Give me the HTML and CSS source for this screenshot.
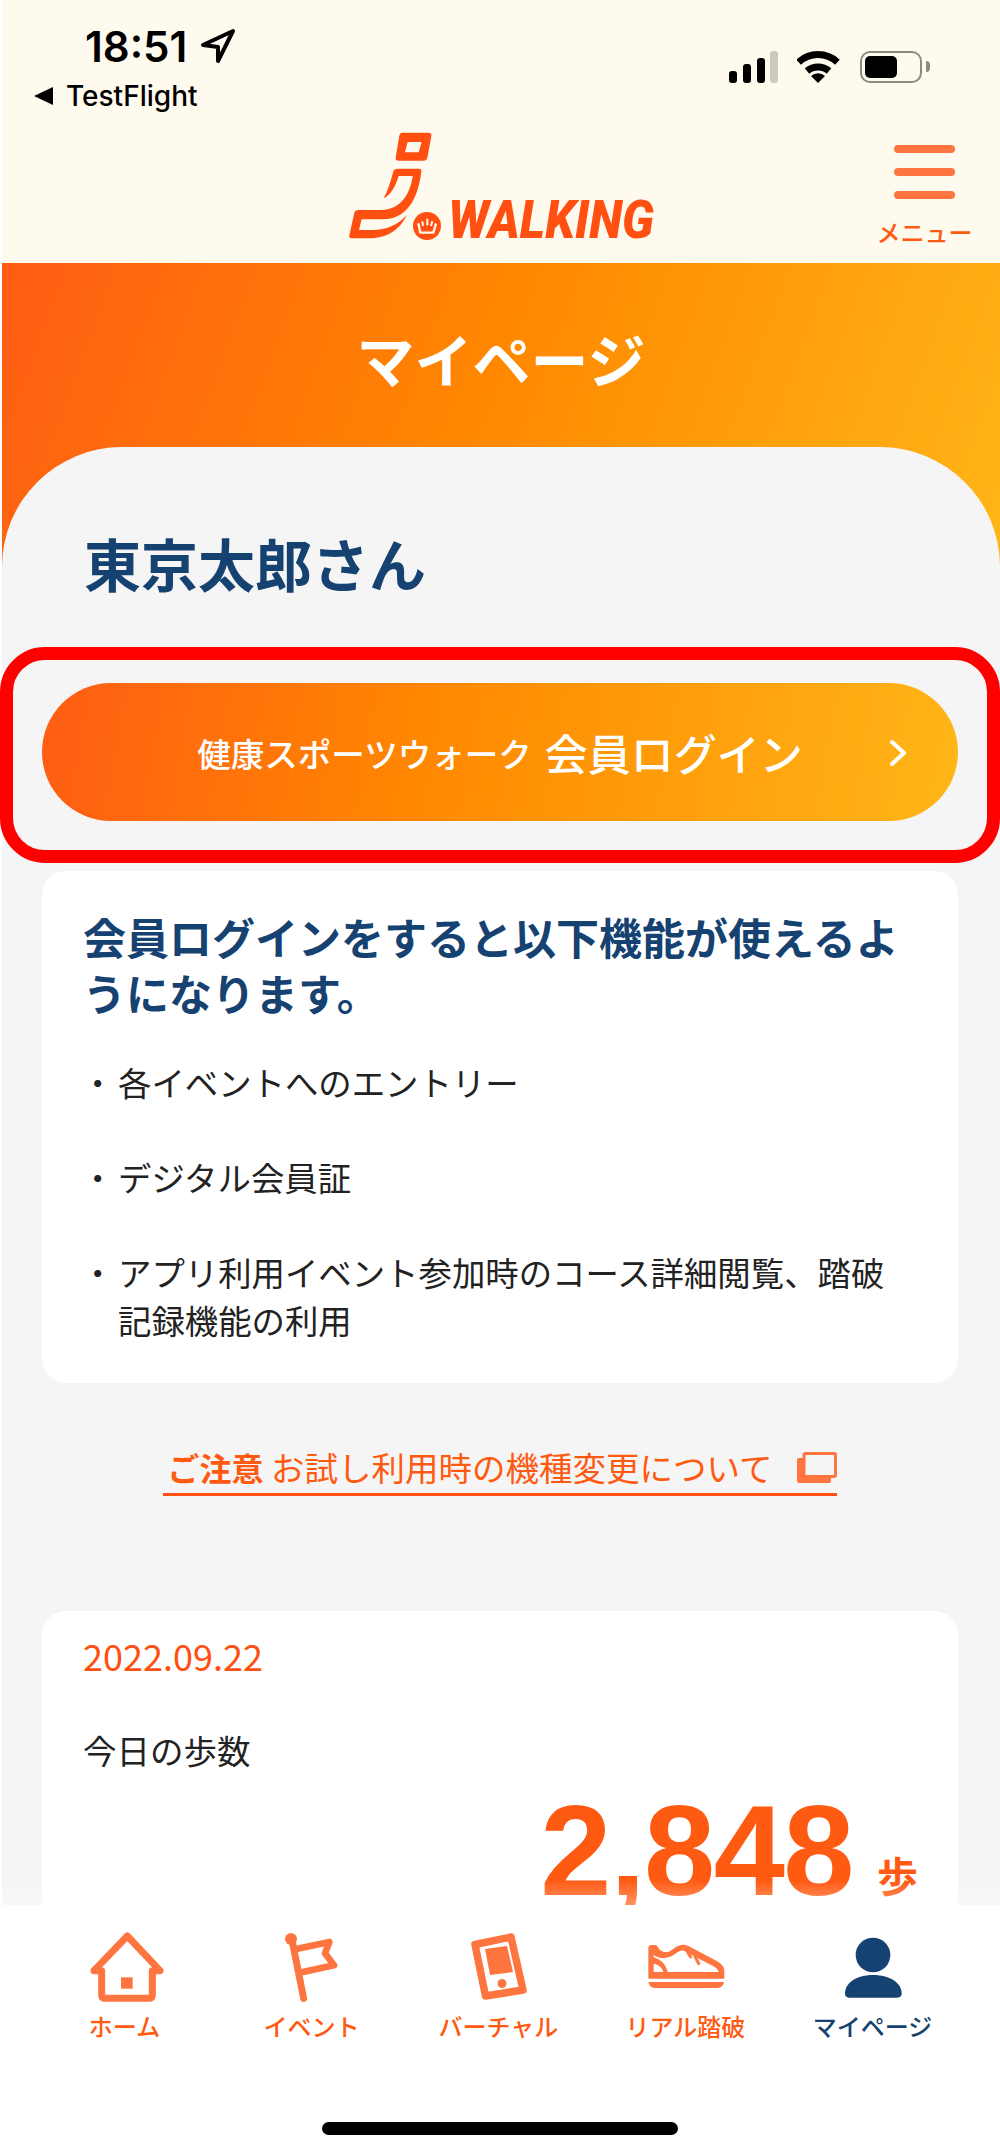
FILE: index.html
```html
<!DOCTYPE html>
<html lang="ja">
<head>
<meta charset="utf-8">
<title>マイページ</title>
<link rel="stylesheet" href="styles.css">
</head>
<body>
<div class="phone">

  <header class="top">
    <div class="status">
      <div class="status-left">
        <div class="clock">
          <span class="time">18:51</span>
          <svg class="locate" viewBox="0 0 36 36"><path d="M33 3 L3 17 L18 19 L18 33 Z" fill="none" stroke="#000" stroke-width="4" stroke-linejoin="round"/></svg>
        </div>
        <div class="back"><span class="back-arrow"></span>TestFlight</div>
      </div>
      <div class="status-right">
        <svg class="signal" viewBox="0 0 50 32">
          <rect x="0" y="20" width="8" height="12" rx="3" fill="#000"/>
          <rect x="14" y="13" width="8" height="19" rx="3" fill="#000"/>
          <rect x="28" y="7" width="8" height="25" rx="3" fill="#000"/>
          <rect x="41" y="0" width="8" height="32" rx="3" fill="#cdcabd"/>
        </svg>
        <svg class="wifi" viewBox="0 0 44 32">
          <path d="M1.6 11.2 A28.5 28.5 0 0 1 40.4 11.2" fill="none" stroke="#000" stroke-width="7"/>
          <path d="M10 20 A17 17 0 0 1 32 20" fill="none" stroke="#000" stroke-width="7"/>
          <path d="M21 32 L14 25 A10 10 0 0 1 28 25 Z" fill="#000"/>
        </svg>
        <div class="battery"><div class="battery-fill"></div></div>
        <div class="battery-nub"></div>
      </div>
    </div>
    <div class="brand">
      <svg class="logo" viewBox="0 0 1200 450">
        <path fill-rule="evenodd" fill="#ff5012" d="M304 68 H382 Q393 68 391 79 L379 143 Q377 152 368 152 H292 Q282 152 284 142 L295 77 Q297 68 304 68 Z M320 96 L312 127 H353 L362 96 Z"/>
        <path fill="#ff5012" d="M290 176 H354 Q362 176 361 184 C355 235 335 328 245 328 H182 L174 360 H215 C255 360 290 345 318 315 C295 360 260 385 200 385 H152 Q143 385 145 376 L160 308 Q162 300 172 300 H240 C305 300 330 240 335 198 H293 C285 225 270 255 248 265 C262 240 270 210 277 184 Q279 176 290 176 Z"/>
        <circle cx="378" cy="348" r="42" fill="#ff5012"/>
        <path d="M352 340 L358 368 H397 L405 340" fill="none" stroke="#fffaee" stroke-width="7" stroke-linejoin="round"/>
        <path d="M366 348 L364 334 M379 346 V326 M390 348 L394 334" fill="none" stroke="#fffaee" stroke-width="6"/>
        <text class="logo-word" transform="translate(442 385) scale(.91 1)">WALKING</text>
      </svg>
      <div class="menu">
        <span class="menu-bar"></span>
        <span class="menu-bar"></span>
        <span class="menu-bar"></span>
        <span class="menu-label">メニュー</span>
      </div>
    </div>
  </header>

  <section class="hero">
    <h1>マイページ</h1>
    <main class="sheet">
      <h2 class="user-name">東京太郎さん</h2>
      <a class="login-btn">
        <span class="login-small">健康スポーツウォーク</span>
        <span class="login-big">会員ログイン</span>
        <svg class="chevron" viewBox="0 0 16 26"><path d="M2 2 L14 13 L2 24" fill="none" stroke="#fff" stroke-width="4" stroke-linecap="round" stroke-linejoin="round"/></svg>
        <span class="highlight"></span>
      </a>
      <div class="card info-card">
        <h3>会員ログインをすると以下機能が使えるようになります。</h3>
        <ul>
          <li>各イベントへのエントリー</li>
          <li>デジタル会員証</li>
          <li>アプリ利用イベント参加時のコース詳細閲覧、踏破記録機能の利用</li>
        </ul>
      </div>
      <div class="notice-wrap">
        <a class="notice">
          <span><b>ご注意</b> お試し利用時の機種変更について</span>
          <svg class="window-icon" viewBox="0 0 40 31"><rect x="0" y="6" width="34" height="25" rx="2" fill="#ff7540"/><rect x="7" y="1.5" width="31.5" height="23" rx="1.5" fill="#f5f5f5" stroke="#ff7540" stroke-width="3"/></svg>
        </a>
      </div>
      <div class="card steps-card">
        <div class="date">2022.09.22</div>
        <div class="steps-label">今日の歩数</div>
        <div class="steps"><span class="steps-num">2,848</span><span class="steps-unit">歩</span></div>
      </div>
    </main>
  </section>

  <nav class="tabbar">
    <div class="tabs">
      <a class="tab">
        <svg viewBox="120 0 270 216"><path d="M162 122 L262 18 L360 122 H337 V195 Q337 205 327 205 H195 Q185 205 185 195 V122 Z" fill="none" stroke="#ff7540" stroke-width="21" stroke-linejoin="round"/><rect x="243" y="142" width="35" height="34" fill="#ff7540"/></svg>
        <span>ホーム</span>
      </a>
      <a class="tab">
        <svg viewBox="681 0 270 216"><circle cx="753" cy="27" r="18" fill="#ff7540"/><path d="M757 35 L791 205" fill="none" stroke="#ff7540" stroke-width="21" stroke-linecap="round"/><path d="M765 58 L868 36 L855 70 L882 106 L785 127" fill="none" stroke="#ff7540" stroke-width="20" stroke-linejoin="round"/></svg>
        <span>イベント</span>
      </a>
      <a class="tab">
        <svg viewBox="455 1930 90 72"><path d="M476 1944.5 L512 1937 L524 1990 L486.5 1996 Z" fill="none" stroke="#ff7540" stroke-width="7.5" stroke-linejoin="round"/><path d="M486 1949 L508 1946 L514 1972 L491 1975 Z" fill="#ff7540"/><circle cx="503" cy="1983.5" r="4.5" fill="#ff7540"/></svg>
        <span>バーチャル</span>
      </a>
      <a class="tab">
        <svg viewBox="366 0 270 216"><path fill="#ff7540" d="M388 55 Q388 45 398 45 H408 Q414 45 417 52 C424 66 442 72 458 60 C470 50 482 43 494 44 Q502 45 510 49 L592 92 C608 101 616 110 616 122 V146 H388 Z"/><path fill="#fff" d="M404 75 C425 90 450 85 468 72 C478 64 487 60 494 62 L586 110 C594 115 598 120 599 126 H446 C440 102 425 88 404 82 Z"/><path fill="#fff" d="M404 101 C420 104 430 114 433 126 H404 Z"/><path d="M505 66 L517 84 M527 78 L541 104" stroke="#ff7540" stroke-width="9" fill="none"/><path fill="#ff7540" d="M388 156 H615 Q612 173 596 174 H406 Q391 173 388 156 Z"/></svg>
        <span>リアル踏破</span>
      </a>
      <a class="tab tab-active">
        <svg viewBox="927 0 270 216"><circle cx="1062" cy="75" r="52" fill="#164271"/><path d="M978 190 C978 160 1010 135 1062 135 C1115 135 1148 160 1148 190 Q1148 203 1135 203 H990 Q978 203 978 190 Z" fill="#164271"/></svg>
        <span>マイページ</span>
      </a>
    </div>
    <div class="home-bar"></div>
  </nav>

</div>
</body>
</html>
```

FILE: styles.css
```css
* {
    box-sizing: border-box;
}

html, body {
    margin: 0;
    padding: 0;
    background: #fff;
}

body {
    font-family: "Noto Sans CJK JP", "Liberation Sans", sans-serif;
    color: #222;
}

.phone {
    position: relative;
    width: 1000px;
    height: 2156px;
    padding-left: 2px;
    overflow: hidden;
}

/* status bar + logo */
.top {
    height: 263px;
    background: #fffaee;
}

.status {
    display: flex;
    justify-content: space-between;
    height: 110px;
    padding: 22px 70px 0 32px;
}

.clock {
    display: flex;
    align-items: center;
    padding-left: 51px;
    height: 48px;
}

.time {
    font-family: Inter, "Liberation Sans", sans-serif;
    font-size: 42px;
    font-weight: 600;
    color: #000;
}

.locate {
    width: 36px;
    height: 36px;
    margin-left: 13px;
}

.back {
    display: flex;
    align-items: center;
    margin-top: 9px;
    font-family: Inter, "Liberation Sans", sans-serif;
    font-size: 28px;
    font-weight: 500;
    color: #000;
}

.back-arrow {
    width: 0;
    height: 0;
    margin-right: 13px;
    border-top: 9px solid transparent;
    border-bottom: 9px solid transparent;
    border-right: 19px solid #000;
}

.status-right {
    display: flex;
    align-items: center;
    height: 33px;
    margin-top: 28px;
}

.signal {
    width: 50px;
    height: 32px;
}

.wifi {
    width: 44px;
    height: 32px;
    margin-left: 18px;
}

.battery {
    width: 62px;
    height: 32px;
    margin-left: 19px;
    padding: 3px;
    border: 2px solid #8d8b80;
    border-radius: 10px;
}

.battery-fill {
    width: 32px;
    height: 100%;
    background: #000;
    border-radius: 5px;
}

.battery-nub {
    width: 4px;
    height: 11px;
    margin-left: 4px;
    background: #8d8b80;
    border-radius: 0 4px 4px 0;
}

.brand {
    display: flex;
    justify-content: center;
    position: relative;
}

.logo {
    display: block;
    width: 400px;
    height: 150px;
}

.logo-word {
    font-family: Roboto, "Liberation Sans", sans-serif;
    font-size: 159px;
    font-weight: 900;
    font-style: italic;
    fill: #ff5012;
}

.menu {
    position: absolute;
    right: 29px;
    top: 35px;
    display: flex;
    flex-direction: column;
    align-items: center;
    width: 93px;
}

.menu-bar {
    width: 61px;
    height: 8px;
    margin-bottom: 15px;
    background: #ff7540;
    border-radius: 4px;
}

.menu-label {
    margin-top: 3px;
    font-size: 24px;
    font-weight: 500;
    line-height: 30px;
    white-space: nowrap;
    color: #ff5a12;
}

/* gradient head + grey sheet */
.hero {
    background: linear-gradient(110deg, #ff5c14 0%, #ff8800 48%, #ffb618 100%) no-repeat;
    background-size: 100% 310px;
    padding-top: 53px;
}

.hero h1 {
    margin: 0;
    height: 131px;
    font-size: 58px;
    font-weight: 700;
    line-height: 84px;
    text-align: center;
    color: #fff;
}

.sheet {
    padding: 75px 40px 300px 40px;
    background: #f5f5f5;
    border-radius: 120px 120px 0 0;
}

.user-name {
    margin: 0 0 0 42px;
    font-size: 57px;
    font-weight: 700;
    line-height: 80px;
    color: #164271;
}

.login-btn {
    position: relative;
    display: flex;
    align-items: center;
    justify-content: center;
    width: 916px;
    height: 138px;
    margin-top: 81px;
    color: #fff;
    background: linear-gradient(100deg, #ff5c14 0%, #ff8800 42%, #ffb618 100%);
    border-radius: 69px;
}

.login-small {
    font-size: 33.5px;
    font-weight: 500;
}

.login-big {
    margin-left: 13px;
    font-size: 43px;
    font-weight: 500;
}

.chevron {
    position: absolute;
    right: 52px;
    top: 57px;
    width: 16px;
    height: 26px;
}

/* red marker lying over the screenshot */
.highlight {
    position: absolute;
    left: -42px;
    top: -36px;
    width: 1000px;
    height: 216px;
    border: 13px solid #f00;
    border-radius: 45px;
}

.card {
    width: 916px;
    background: #fff;
    border-radius: 24px;
}

.info-card {
    height: 512px;
    margin-top: 50px;
    padding: 37px 40px 0 41px;
}

.info-card h3 {
    margin: 0;
    font-size: 43px;
    font-weight: 700;
    line-height: 56px;
    color: #164271;
}

.info-card ul {
    margin: 38px 0 0 0;
    padding: 0 26px 0 0;
    list-style: none;
}

.info-card li {
    position: relative;
    margin-bottom: 47px;
    padding-left: 35px;
    font-size: 33.4px;
    line-height: 48px;
}

.info-card li:before {
    content: "・";
    position: absolute;
    left: -2px;
}

.notice-wrap {
    display: flex;
    justify-content: center;
    width: 916px;
    margin-top: 59px;
}

.notice {
    display: flex;
    align-items: center;
    padding: 0 0 1px 4px;
    font-size: 33.5px;
    line-height: 50px;
    white-space: nowrap;
    color: #ff5a12;
    border-bottom: 3px solid #ff5012;
}

.notice b {
    font-size: 32px;
}

.window-icon {
    width: 40px;
    height: 31px;
    margin-left: 24px;
}

.steps-card {
    margin-top: 115px;
    padding: 15px 41px 0 41px;
}

.date {
    font-size: 36px;
    line-height: 58px;
    color: #ff5012;
}

.steps-label {
    margin-top: 41px;
    font-size: 33.5px;
    line-height: 50px;
}

.steps {
    display: flex;
    align-items: flex-end;
    justify-content: flex-end;
    margin-top: 1px;
    color: #ff5a12;
}

.steps-num {
    font-family: "Liberation Sans", sans-serif;
    font-size: 128px;
    font-weight: bold;
    line-height: 150px;
    letter-spacing: -1.5px;
}

.steps-unit {
    margin: 0 -1px 22px 24px;
    font-size: 41px;
    font-weight: 700;
    line-height: 60px;
}

/* bottom tabs sit over the page */
.tabbar {
    position: absolute;
    left: 0;
    right: 0;
    bottom: 0;
    height: 251px;
    background: #fff;
}

.tabbar:before {
    content: "";
    position: absolute;
    left: 0;
    right: 0;
    top: -25px;
    height: 25px;
    background: linear-gradient(rgba(255, 255, 255, 0), rgba(255, 255, 255, .35));
}

.tabs {
    display: grid;
    grid-template-columns: repeat(5, 187px);
    padding: 25px 0 0 31px;
}

.tab {
    display: flex;
    flex-direction: column;
    align-items: center;
    font-size: 24px;
    font-weight: 500;
    line-height: 36px;
    color: #ff5a12;
}

.tab svg {
    width: 90px;
    height: 72px;
    margin-bottom: 6px;
}

.tab-active {
    color: #164271;
}

.home-bar {
    position: absolute;
    left: 322px;
    bottom: 21px;
    width: 356px;
    height: 13px;
    background: #000;
    border-radius: 7px;
}
```
